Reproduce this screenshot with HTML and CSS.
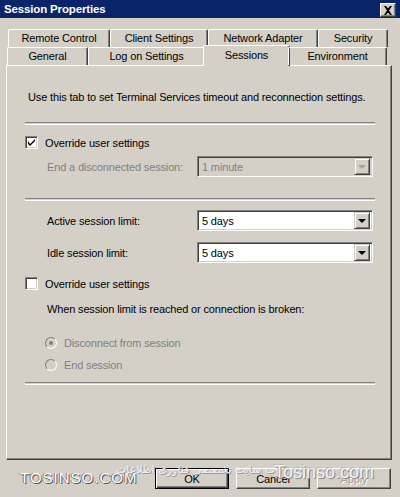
FILE: index.html
```html
<!DOCTYPE html>
<html lang="en">
<head>
    <meta charset="UTF-8">
    <title>Session Properties</title>
    <link rel="stylesheet" href="styles.css">
</head>
<body>
<div class="window">
    <div class="titlebar">
        <span>Session Properties</span>
        <span class="close-btn">
            <svg width="10" height="9" viewBox="0 0 10 9"><path d="M1 0h2l2 2.5L7 0h2L6 4.5 9 9H7L5 6.5 3 9H1l3-4.5z" fill="#000"/></svg>
        </span>
    </div>

    <div class="tabstrip">
        <div class="tab-row back">
            <div class="tab" style="width: 102px">Remote Control</div>
            <div class="tab" style="width: 98px">Client Settings</div>
            <div class="tab" style="width: 110px">Network Adapter</div>
            <div class="tab" style="width: 70px">Security</div>
        </div>
        <div class="tab-row front">
            <div class="tab" style="width: 81px">General</div>
            <div class="tab" style="width: 117px">Log on Settings</div>
            <div class="tab selected" style="width: 83px">Sessions</div>
            <div class="tab" style="width: 99px">Environment</div>
        </div>
    </div>

    <div class="panel">
        <p class="intro">Use this tab to set Terminal Services timeout and reconnection settings.</p>
        <div class="separator sep-1"></div>

        <label class="check-row first-check">
            <span class="checkbox checked">
                <svg width="7" height="7" viewBox="0 0 7 7"><path d="M0 2v3l2 2 5-5V0L2 5z" fill="#000"/></svg>
            </span>
            Override user settings
        </label>

        <div class="field-row disconnected">
            <span class="field-label disabled">End a disconnected session:</span>
            <div class="select disabled">
                <span class="select-value">1 minute</span>
                <span class="select-btn"><i class="arrow"></i></span>
            </div>
        </div>

        <div class="separator sep-2"></div>

        <div class="field-row active-limit">
            <span class="field-label">Active session limit:</span>
            <div class="select">
                <span class="select-value">5 days</span>
                <span class="select-btn"><i class="arrow"></i></span>
            </div>
        </div>

        <div class="field-row idle-limit">
            <span class="field-label">Idle session limit:</span>
            <div class="select">
                <span class="select-value">5 days</span>
                <span class="select-btn"><i class="arrow"></i></span>
            </div>
        </div>

        <label class="check-row second-check">
            <span class="checkbox"></span>
            Override user settings
        </label>

        <p class="when-text">When session limit is reached or connection is broken:</p>

        <div class="radio-row first-radio disabled">
            <span class="radio checked"><i class="dot"></i></span>
            Disconnect from session
        </div>
        <div class="radio-row second-radio disabled">
            <span class="radio"></span>
            End session
        </div>

        <div class="separator sep-3"></div>
    </div>

    <div class="buttons">
        <button class="btn default">OK</button>
        <button class="btn">Cancel</button>
        <button class="btn disabled">Apply</button>
        <span class="watermark wm-left">TOSINSO.COM</span>
        <span class="watermark wm-arabic" dir="rtl" lang="fa">وب سایت تخصصی فناوری اطلاعات</span>
        <span class="watermark wm-right">Tosinso.com</span>
    </div>
</div>
</body>
</html>
```

FILE: styles.css
```css
body {
    margin: 0;
    background-color: #d4d0c8;
    font-family: "Liberation Sans", Arial, sans-serif;
    font-size: 11px;
    letter-spacing: -0.15px;
    color: #000;
}
.window {
    width: 400px;
    height: 497px;
    position: relative;
    overflow: hidden;
}
.titlebar {
    height: 18px;
    background-color: #0a246a;
    color: #fff;
    font-weight: bold;
    font-size: 11.5px;
    display: flex;
    align-items: center;
    justify-content: space-between;
    padding: 0 4px 0 4px;
}
.close-btn {
    width: 14px;
    height: 12px;
    background-color: #d4d0c8;
    border: 1px solid;
    border-color: #fff #404040 #404040 #fff;
    box-shadow: inset -1px -1px #808080;
    display: flex;
    align-items: center;
    justify-content: center;
    margin-top: 2px;
}

/* tabs */
.tabstrip {
    margin: 11px 0 0 0;
}
.tab-row {
    display: flex;
    height: 18px;
}
.tab-row.back {
    padding-left: 8px;
}
.tab-row.front {
    padding-left: 7px;
    position: relative;
    z-index: 2;
}
.tab {
    box-sizing: border-box;
    height: 18px;
    border-top: 1px solid #fff;
    border-left: 1px solid #fff;
    border-right: 1px solid #404040;
    border-radius: 2px 2px 0 0;
    box-shadow: inset -1px 0 #808080;
    display: flex;
    align-items: center;
    justify-content: center;
    padding-bottom: 1px;
}
.tab.selected {
    height: 21px;
    margin-top: -2px;
    margin-left: -2px;
    margin-right: -2px;
    background-color: #d4d0c8;
    padding-bottom: 3px;
    width: 87px !important;
}

/* panel */
.panel {
    box-sizing: border-box;
    margin: 0 8px 0 6px;
    height: 395px;
    border-top: 1px solid #fff;
    border-left: 1px solid #fff;
    border-right: 1px solid #404040;
    border-bottom: 1px solid #404040;
    box-shadow: inset -1px -1px #808080;
    padding: 0 16px 0 18px;
    display: flex;
    flex-direction: column;
}
.intro {
    margin: 24px 0 0 3px;
    line-height: 14px;
}
.separator {
    height: 1px;
    border-top: 1px solid #808080;
    border-bottom: 1px solid #fff;
}
.sep-1 { margin-top: 18px; }
.sep-2 { margin-top: 21px; }
.sep-3 { margin-top: 10px; }

.check-row {
    display: flex;
    align-items: center;
    height: 13px;
    gap: 7px;
}
.first-check { margin-top: 11px; }
.second-check { margin-top: 14px; }
.checkbox {
    box-sizing: border-box;
    width: 13px;
    height: 13px;
    background: #fff;
    border: 1px solid;
    border-color: #808080 #fff #fff #808080;
    box-shadow: inset 1px 1px #404040, inset -1px -1px #d4d0c8;
    display: flex;
    align-items: center;
    justify-content: center;
}

.field-row {
    display: flex;
    align-items: center;
    padding-left: 22px;
    height: 21px;
}
.disconnected { margin-top: 7px; }
.active-limit { margin-top: 9px; }
.idle-limit { margin-top: 11px; }
.field-label {
    width: 150px;
}
.disabled {
    color: #808080;
}
.select {
    box-sizing: border-box;
    width: 176px;
    height: 21px;
    background: #fff;
    border: 1px solid;
    border-color: #808080 #fff #fff #808080;
    box-shadow: inset 1px 1px #404040, inset -1px -1px #d4d0c8;
    display: flex;
    align-items: center;
    justify-content: space-between;
    padding: 2px 2px 2px 4px;
}
.select.disabled {
    background: #d4d0c8;
}
.select-btn {
    box-sizing: border-box;
    width: 16px;
    height: 17px;
    background: #d4d0c8;
    border: 1px solid;
    border-color: #d4d0c8 #404040 #404040 #d4d0c8;
    box-shadow: inset 1px 1px #fff, inset -1px -1px #808080;
    display: flex;
    align-items: center;
    justify-content: center;
}
.arrow {
    width: 0;
    height: 0;
    border-left: 4px solid transparent;
    border-right: 4px solid transparent;
    border-top: 4px solid #000;
}
.select.disabled .arrow {
    border-top-color: #a0a0a0;
}

.when-text {
    margin: 12px 0 0 22px;
    line-height: 14px;
}
.radio-row {
    display: flex;
    align-items: center;
    gap: 7px;
    height: 14px;
    padding-left: 20px;
}
.first-radio { margin-top: 20px; }
.second-radio { margin-top: 8px; }
.radio {
    box-sizing: border-box;
    width: 12px;
    height: 12px;
    border-radius: 50%;
    border: 1px solid;
    border-color: #808080 #fff #fff #808080;
    background: #d4d0c8;
    display: flex;
    align-items: center;
    justify-content: center;
}
.dot {
    width: 4px;
    height: 4px;
    border-radius: 50%;
    background: #808080;
}

/* bottom buttons */
.buttons {
    display: flex;
    justify-content: flex-end;
    gap: 7px;
    padding-right: 9px;
    margin-top: 8px;
    position: relative;
}
.btn {
    box-sizing: border-box;
    width: 74px;
    height: 21px;
    background: #d4d0c8;
    font-family: "Liberation Sans", Arial, sans-serif;
    font-size: 11px;
    letter-spacing: -0.15px;
    border: 1px solid;
    border-color: #fff #404040 #404040 #fff;
    box-shadow: inset -1px -1px #808080;
    padding: 0;
}
.btn.default {
    border: 1px solid #000;
    box-shadow: inset 1px 1px #fff, inset -1px -1px #404040, inset -2px -2px #808080;
}
.btn.disabled {
    color: #a0a0a0;
    text-shadow: 1px 1px #fff;
}

.watermark {
    position: absolute;
    color: #fff;
    pointer-events: none;
    white-space: nowrap;
}
.wm-left {
    left: 20px;
    top: 1px;
    font-size: 15px;
    letter-spacing: 1px;
    text-shadow: 1px 1px 0 #555, -1px 0 0 #777;
}
.wm-arabic {
    left: 116px;
    top: -5px;
    font-family: "DejaVu Sans", sans-serif;
    font-size: 11px;
    letter-spacing: 0;
    color: #eeeeee;
    text-shadow: 1px 1px 0 #9a9a9a;
}
.wm-right {
    left: 274px;
    top: -6px;
    font-size: 18px;
    letter-spacing: 0;
    color: #f4f4f4;
    text-shadow: 1px 1px 0 #8a8a8a, -1px -1px 0 #bbb;
}
```
